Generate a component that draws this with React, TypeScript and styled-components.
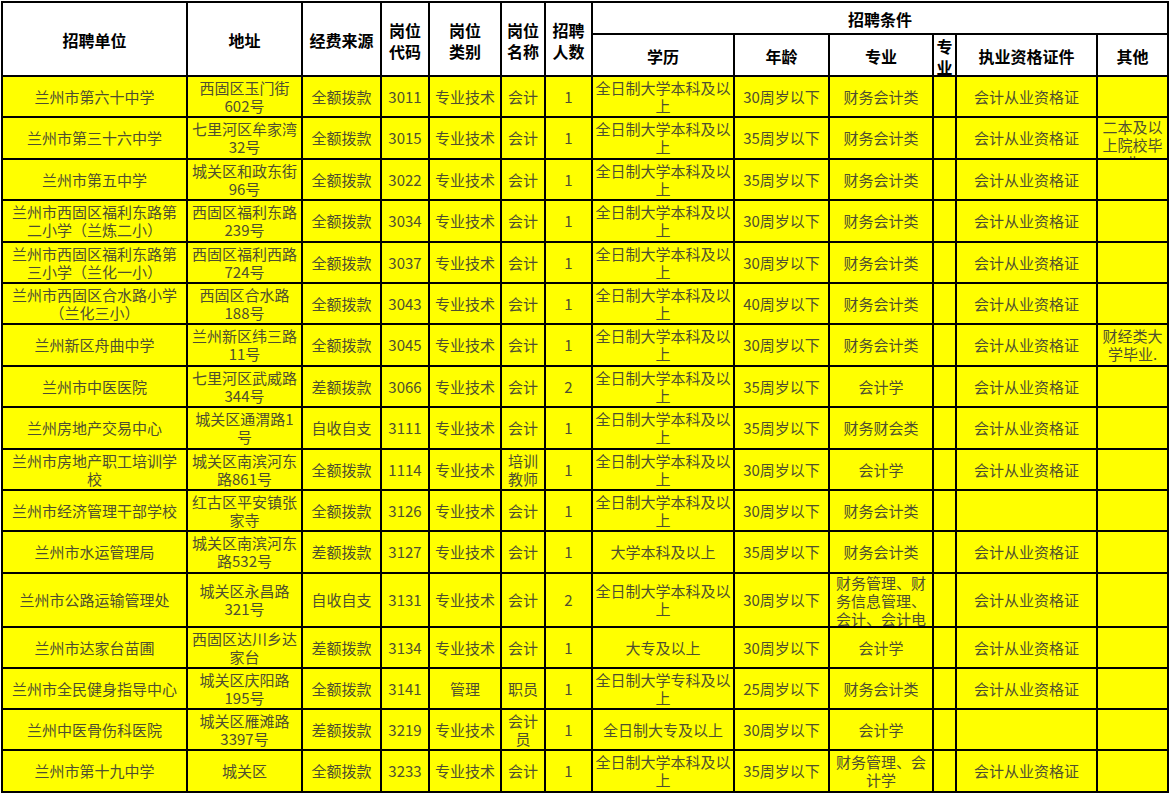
import React from "react";
import styled, { createGlobalStyle } from "styled-components";

const GlobalStyle = createGlobalStyle`
  html, body { margin: 0; padding: 0; background: #ffffff; }
  body { font-family: "Noto Sans CJK SC", sans-serif; }
`;

const Sheet = styled.table`
  border-collapse: collapse;
  table-layout: fixed;
  width: 1166px;
  margin: 1px 0 0 1px;
`;

const Col = styled.col<{ $w: number }>`
  width: ${(p) => p.$w}px;
`;

const HeadCell = styled.th`
  border: 2px solid #000;
  padding: 0;
  background: #ffffff;
  color: #000;
  text-align: center;
  vertical-align: middle;
  font-family: "Noto Sans CJK SC", sans-serif;
  font-weight: 700;
  font-size: 16px;
  line-height: 21px;
`;

const HeadText = styled.div<{ $h?: number }>`
  ${(p) => (p.$h ? `height: ${p.$h - 2}px;` : "")}
  display: flex;
  align-items: center;
  justify-content: center;
  overflow: hidden;
  padding-top: 3px;
  box-sizing: border-box;
`;

const HeadLabel = styled.span`
  display: block;
  text-align: center;
`;

const Under = styled.span`
  text-decoration: underline;
  text-underline-offset: 2px;
`;

const Cell = styled.td`
  border: 2px solid #000;
  padding: 0;
  background: #ffff00;
  vertical-align: middle;
`;

const CellText = styled.div<{ $h: number; $tight?: boolean }>`
  height: ${(p) => p.$h - 2}px;
  overflow: hidden;
  display: flex;
  align-items: safe center;
  justify-content: center;
  text-align: center;
  box-sizing: border-box;
  padding: ${(p) => (p.$tight ? "0" : "0 2px")};
  font-family: "Liberation Sans Narrow", "Noto Sans CJK SC", sans-serif;
  font-size: 15px;
  line-height: 18px;
  color: #4f4f30;
`;

const widths = [185, 115, 79, 48, 72, 44, 47, 142, 95, 104, 23, 141, 71];

type Row = { h: number; cells: string[] };

const BK = "全日制大学本科及以上";
const CERT = "会计从业资格证";

const rows: Row[] = [
  { h: 41, cells: ["兰州市第六十中学", "西固区玉门街602号", "全额拨款", "3011", "专业技术", "会计", "1", BK, "30周岁以下", "财务会计类", "", CERT, ""] },
  { h: 42, cells: ["兰州市第三十六中学", "七里河区牟家湾32号", "全额拨款", "3015", "专业技术", "会计", "1", BK, "35周岁以下", "财务会计类", "", CERT, "二本及以上院校毕业"] },
  { h: 41, cells: ["兰州市第五中学", "城关区和政东街96号", "全额拨款", "3022", "专业技术", "会计", "1", BK, "35周岁以下", "财务会计类", "", CERT, ""] },
  { h: 42, cells: ["兰州市西固区福利东路第二小学（兰炼二小）", "西固区福利东路239号", "全额拨款", "3034", "专业技术", "会计", "1", BK, "30周岁以下", "财务会计类", "", CERT, ""] },
  { h: 41, cells: ["兰州市西固区福利东路第三小学（兰化一小）", "西固区福利西路724号", "全额拨款", "3037", "专业技术", "会计", "1", BK, "30周岁以下", "财务会计类", "", CERT, ""] },
  { h: 41, cells: ["兰州市西固区合水路小学（兰化三小）", "西固区合水路188号", "全额拨款", "3043", "专业技术", "会计", "1", BK, "40周岁以下", "财务会计类", "", CERT, ""] },
  { h: 42, cells: ["兰州新区舟曲中学", "兰州新区纬三路11号", "全额拨款", "3045", "专业技术", "会计", "1", BK, "30周岁以下", "财务会计类", "", CERT, "财经类大学毕业."] },
  { h: 41, cells: ["兰州市中医医院", "七里河区武威路344号", "差额拨款", "3066", "专业技术", "会计", "2", BK, "35周岁以下", "会计学", "", CERT, ""] },
  { h: 42, cells: ["兰州房地产交易中心", "城关区通渭路1号", "自收自支", "3111", "专业技术", "会计", "1", BK, "35周岁以下", "财务财会类", "", CERT, ""] },
  { h: 41, cells: ["兰州市房地产职工培训学校", "城关区南滨河东路861号", "全额拨款", "1114", "专业技术", "培训教师", "1", BK, "30周岁以下", "会计学", "", CERT, ""] },
  { h: 41, cells: ["兰州市经济管理干部学校", "红古区平安镇张家寺", "全额拨款", "3126", "专业技术", "会计", "1", BK, "30周岁以下", "财务会计类", "", "", ""] },
  { h: 42, cells: ["兰州市水运管理局", "城关区南滨河东路532号", "差额拨款", "3127", "专业技术", "会计", "1", "大学本科及以上", "35周岁以下", "财务会计类", "", CERT, ""] },
  { h: 54, cells: ["兰州市公路运输管理处", "城关区永昌路321号", "自收自支", "3131", "专业技术", "会计", "2", BK, "30周岁以下", "财务管理、财务信息管理、会计、会计电算化", "", CERT, ""] },
  { h: 41, cells: ["兰州市达家台苗圃", "西固区达川乡达家台", "差额拨款", "3134", "专业技术", "会计", "1", "大专及以上", "30周岁以下", "会计学", "", CERT, ""] },
  { h: 41, cells: ["兰州市全民健身指导中心", "城关区庆阳路195号", "全额拨款", "3141", "管理", "职员", "1", "全日制大学专科及以上", "25周岁以下", "财务会计类", "", CERT, ""] },
  { h: 41, cells: ["兰州中医骨伤科医院", "城关区雁滩路3397号", "差额拨款", "3219", "专业技术", "会计员", "1", "全日制大专及以上", "30周岁以下", "会计学", "", "", ""] },
  { h: 42, cells: ["兰州市第十九中学", "城关区", "全额拨款", "3233", "专业技术", "会计", "1", BK, "35周岁以下", "财务管理、会计学", "", CERT, ""] },
];

type Head = { lines: React.ReactNode[] };

const spanHeads: Head[] = [
  { lines: ["招聘单位"] },
  { lines: ["地址"] },
  { lines: ["经费来源"] },
  { lines: ["岗位", "代码"] },
  { lines: ["岗位", "类别"] },
  { lines: ["岗位", "名称"] },
  { lines: ["招聘", "人数"] },
];

const subHeads: Head[] = [
  { lines: ["学历"] },
  { lines: ["年龄"] },
  { lines: ["专业"] },
  { lines: ["专", <Under key="u">业</Under>] },
  { lines: ["执业资格证件"] },
  { lines: ["其他"] },
];

function Label({ lines }: Head) {
  return (
    <HeadLabel>
      {lines.map((l, i) => (
        <React.Fragment key={i}>
          {i > 0 && <br />}
          {l}
        </React.Fragment>
      ))}
    </HeadLabel>
  );
}

export default function App() {
  return (
    <>
      <GlobalStyle />
      <Sheet>
        <colgroup>
          {widths.map((w, i) => (
            <Col key={i} $w={w} />
          ))}
        </colgroup>
        <thead>
          <tr>
            {spanHeads.map((h, i) => (
              <HeadCell key={i} rowSpan={2}>
                <HeadText>
                  <Label lines={h.lines} />
                </HeadText>
              </HeadCell>
            ))}
            <HeadCell colSpan={6}>
              <HeadText $h={32}>
                <Label lines={["招聘条件"]} />
              </HeadText>
            </HeadCell>
          </tr>
          <tr>
            {subHeads.map((h, i) => (
              <HeadCell key={i}>
                <HeadText $h={42}>
                  <Label lines={h.lines} />
                </HeadText>
              </HeadCell>
            ))}
          </tr>
        </thead>
        <tbody>
          {rows.map((r, ri) => (
            <tr key={ri}>
              {r.cells.map((c, ci) => (
                <Cell key={ci}>
                  <CellText $h={r.h} $tight={ci === 10}>
                    {c}
                  </CellText>
                </Cell>
              ))}
            </tr>
          ))}
        </tbody>
      </Sheet>
    </>
  );
}
